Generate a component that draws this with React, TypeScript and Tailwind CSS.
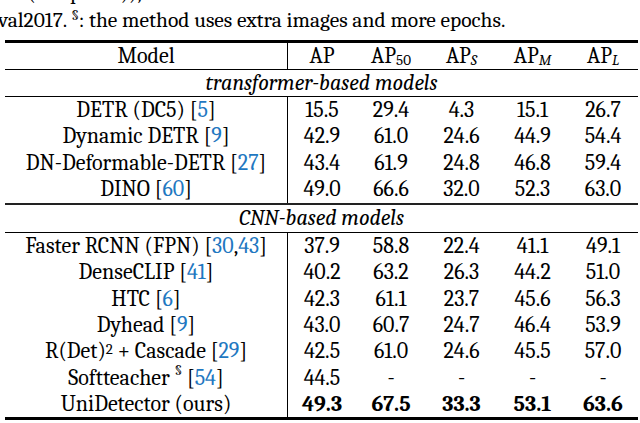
import React from "react";

const C = ({ n }: { n: string }) => <span className="text-[#1f78c1]">{n}</span>;

type Row = { model: React.ReactNode; vals: string[]; bold?: boolean };

const transformer: Row[] = [
  { model: <>DETR (DC5) [<C n="5" />]</>, vals: ["15.5", "29.4", "4.3", "15.1", "26.7"] },
  { model: <>Dynamic DETR [<C n="9" />]</>, vals: ["42.9", "61.0", "24.6", "44.9", "54.4"] },
  { model: <>DN-Deformable-DETR [<C n="27" />]</>, vals: ["43.4", "61.9", "24.8", "46.8", "59.4"] },
  { model: <>DINO [<C n="60" />]</>, vals: ["49.0", "66.6", "32.0", "52.3", "63.0"] },
];

const cnn: Row[] = [
  { model: <>Faster RCNN (FPN) [<C n="30" />,<C n="43" />]</>, vals: ["37.9", "58.8", "22.4", "41.1", "49.1"] },
  { model: <>DenseCLIP [<C n="41" />]</>, vals: ["40.2", "63.2", "26.3", "44.2", "51.0"] },
  { model: <>HTC [<C n="6" />]</>, vals: ["42.3", "61.1", "23.7", "45.6", "56.3"] },
  { model: <>Dyhead [<C n="9" />]</>, vals: ["43.0", "60.7", "24.7", "46.4", "53.9"] },
  {
    model: (
      <>
        R(Det)<sup className="text-[15px] relative -top-[2px]">2</sup>
        {" + Cascade ["}
        <C n="29" />]
      </>
    ),
    vals: ["42.5", "61.0", "24.6", "45.5", "57.0"],
  },
  {
    model: (
      <>
        {"Softteacher "}
        <sup className="text-[15px]">§</sup>
        {" ["}
        <C n="54" />]
      </>
    ),
    vals: ["44.5", "-", "-", "-", "-"],
  },
  { model: <>UniDetector (ours)</>, vals: ["49.3", "67.5", "33.3", "53.1", "63.6"], bold: true },
];

const grid = "grid grid-cols-[283px_68px_70px_71px_71px_70px] items-center";

function DataRow({ r, h }: { r: Row; h: string }) {
  return (
    <div className={`${grid} ${h}`}>
      <div className="h-full flex items-center justify-center border-r border-black whitespace-pre">{r.model}</div>
      {r.vals.map((v, i) => (
        <div key={i} className={`text-center ${r.bold ? "font-bold" : ""}`}>
          {v}
        </div>
      ))}
    </div>
  );
}

export default function App() {
  return (
    <div className="w-[640px] h-[423px] overflow-hidden bg-white text-black font-serif text-[22px]">
      <p className="-mt-[20px] leading-[27px] whitespace-nowrap -ml-[2px] text-[21.5px]">
        ter (36 epochs)), we test all models and evaluated on the COCO
        <br />
        val2017. <sup className="text-[15px]">§</sup>: the method uses extra images and more epochs.
      </p>
      <div className="ml-[5px] w-[633px] mt-[6px] leading-none">
        <div className="h-[2.5px] bg-black" />
        <div className={`${grid} h-[26px]`}>
          <div className="h-full flex items-center justify-center border-r border-black">Model</div>
          <div className="text-center">AP</div>
          <div className="text-center">
            AP<sub className="text-[15px] relative top-[2px]">50</sub>
          </div>
          <div className="text-center">
            AP<sub className="text-[15px] italic relative top-[2px]">S</sub>
          </div>
          <div className="text-center">
            AP<sub className="text-[15px] italic relative top-[2px]">M</sub>
          </div>
          <div className="text-center">
            AP<sub className="text-[15px] italic relative top-[2px]">L</sub>
          </div>
        </div>
        <div className="h-px bg-black" />
        <div className="h-[26px] flex items-center justify-center italic">transformer-based models</div>
        <div className="h-px bg-black" />
        {transformer.map((r, i) => (
          <DataRow key={i} r={r} h="h-[26.5px]" />
        ))}
        <div className="h-[2px] bg-[#222]" />
        <div className="h-[27px] flex items-center justify-center italic">CNN-based models</div>
        <div className="h-px bg-black" />
        {cnn.map((r, i) => (
          <DataRow key={i} r={r} h="h-[26.43px]" />
        ))}
        <div className="h-[2.5px] bg-black" />
      </div>
    </div>
  );
}
